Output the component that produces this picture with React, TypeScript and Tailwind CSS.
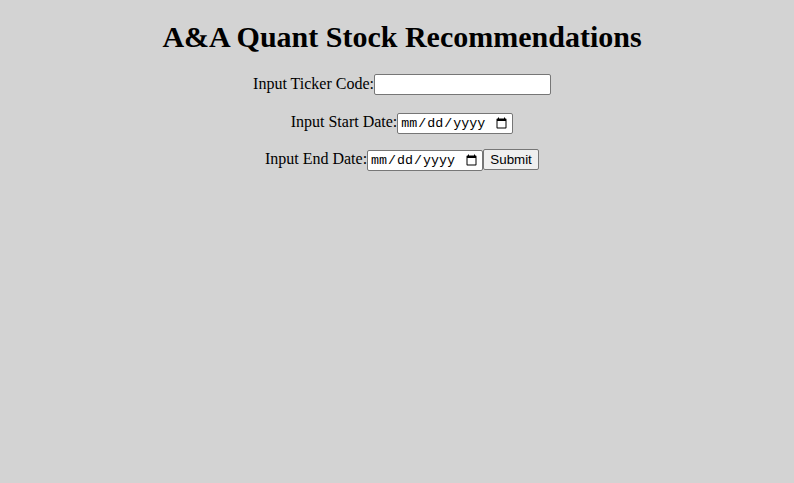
export default function App() {
  const box = "border border-[#767676] rounded-[2px] h-[21px] text-[13.33px]";

  return (
    <div className="min-h-screen flow-root bg-[#d3d3d3] pl-[10px] text-black text-center text-[16px] font-['Liberation_Serif','Times_New_Roman',serif]">
      <h1 className="mt-[20px] mb-0 text-[30px] font-bold leading-[34px]">
        A&amp;A Quant Stock Recommendations
      </h1>

      <form className="mt-[18px] flex flex-col gap-[16.5px]">
        <div className="flex items-baseline justify-center h-[21px]">
          <label htmlFor="ticker">Input Ticker Code:</label>
          <input
            id="ticker"
            type="text"
            className={`${box} w-[177px] px-[2px] bg-white font-['Liberation_Sans',Arial,sans-serif]`}
          />
        </div>
        <div className="flex items-baseline justify-center h-[21px]">
          <label htmlFor="start">Input Start Date:</label>
          <input
            id="start"
            type="date"
            className={`${box} w-[116px] px-[2px] bg-white font-['Liberation_Mono',monospace] text-[12.5px]`}
          />
        </div>
        <div className="flex items-baseline justify-center h-[21px]">
          <label htmlFor="end">Input End Date:</label>
          <input
            id="end"
            type="date"
            className={`${box} w-[116px] px-[2px] bg-white font-['Liberation_Mono',monospace] text-[12.5px]`}
          />
          <button
            type="submit"
            className={`${box} w-[56px] px-[6px] bg-[#efefef] font-['Liberation_Sans',Arial,sans-serif]`}
          >
            Submit
          </button>
        </div>
      </form>
    </div>
  );
}
